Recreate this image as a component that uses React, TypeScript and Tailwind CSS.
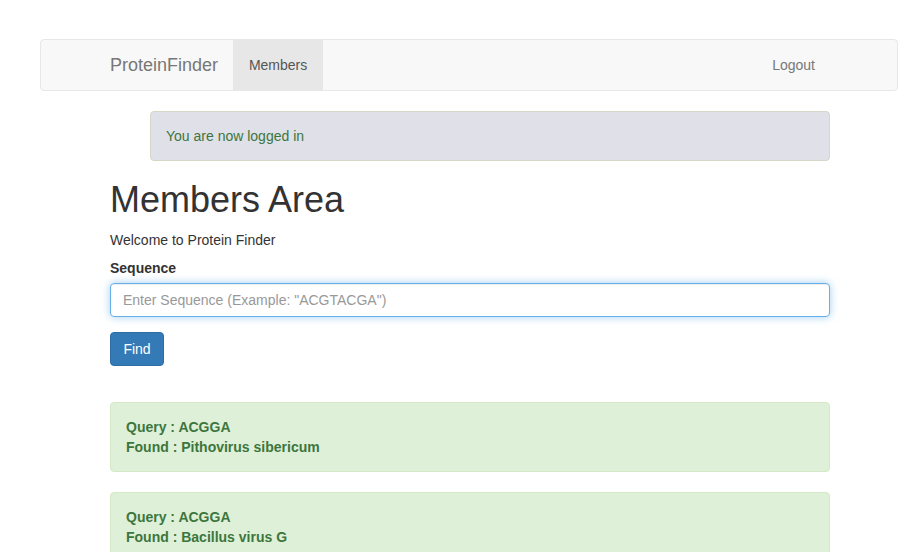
const results = [
  { query: "ACGGA", found: "Pithovirus sibericum" },
  { query: "ACGGA", found: "Bacillus virus G" },
];

const App = () => {
  return (
    <div className="min-h-screen bg-white text-[14px] leading-[20px] text-[#333] font-['Liberation_Sans',Arial,sans-serif]">
      <nav className="mt-[39px] ml-[40px] mr-[15px] mb-[20px] h-[52px] rounded-[4px] border border-[#e7e7e7] bg-[#f8f8f8]">
        <div className="flex h-[50px] items-stretch pl-[54px] pr-[67px]">
          <a className="flex items-center px-[15px] text-[18px] text-[#777]">ProteinFinder</a>
          <a className="flex w-[90px] items-center justify-center bg-[#e7e7e7] text-[#555]">Members</a>
          <a className="ml-auto flex items-center px-[15px] text-[#777]">Logout</a>
        </div>
      </nav>

      <div className="ml-[110px] w-[720px]">
        <div className="ml-[40px] mb-[20px] rounded-[4px] border border-[#d4d8c6] bg-[#dfe0e8] px-[15px] py-[14px] text-[#3c763d]">
          You are now logged in
        </div>

        <h1 className="mb-[10px] text-[36px] leading-[38.6px] font-normal text-[#333]">Members Area</h1>
        <p className="mb-[8px]">Welcome to Protein Finder</p>

        <form className="mb-[36px]">
          <div className="mb-[15px]">
            <label className="mb-[5px] block font-bold">Sequence</label>
            <input
              className="block h-[34px] w-full rounded-[4px] border border-[#66afe9] px-[12px] text-[14px] text-[#555] placeholder:text-[#999] outline-none shadow-[inset_0_1px_1px_rgba(0,0,0,0.075),0_0_8px_rgba(102,175,233,0.6)]"
              placeholder='Enter Sequence (Example: "ACGTACGA")'
            />
          </div>
          <button
            type="button"
            className="h-[34px] w-[54px] rounded-[4px] border border-[#2e6da4] bg-[#337ab7] text-[14px] text-white"
          >
            Find
          </button>
        </form>

        {results.map((r, i) => (
          <div
            key={i}
            className="mb-[20px] rounded-[4px] border border-[#d6e9c6] bg-[#dff0d8] px-[15px] py-[14px] font-bold text-[#3c763d]"
          >
            <div>Query : {r.query}</div>
            <div>Found : {r.found}</div>
          </div>
        ))}
      </div>
    </div>
  );
};

export default App;
